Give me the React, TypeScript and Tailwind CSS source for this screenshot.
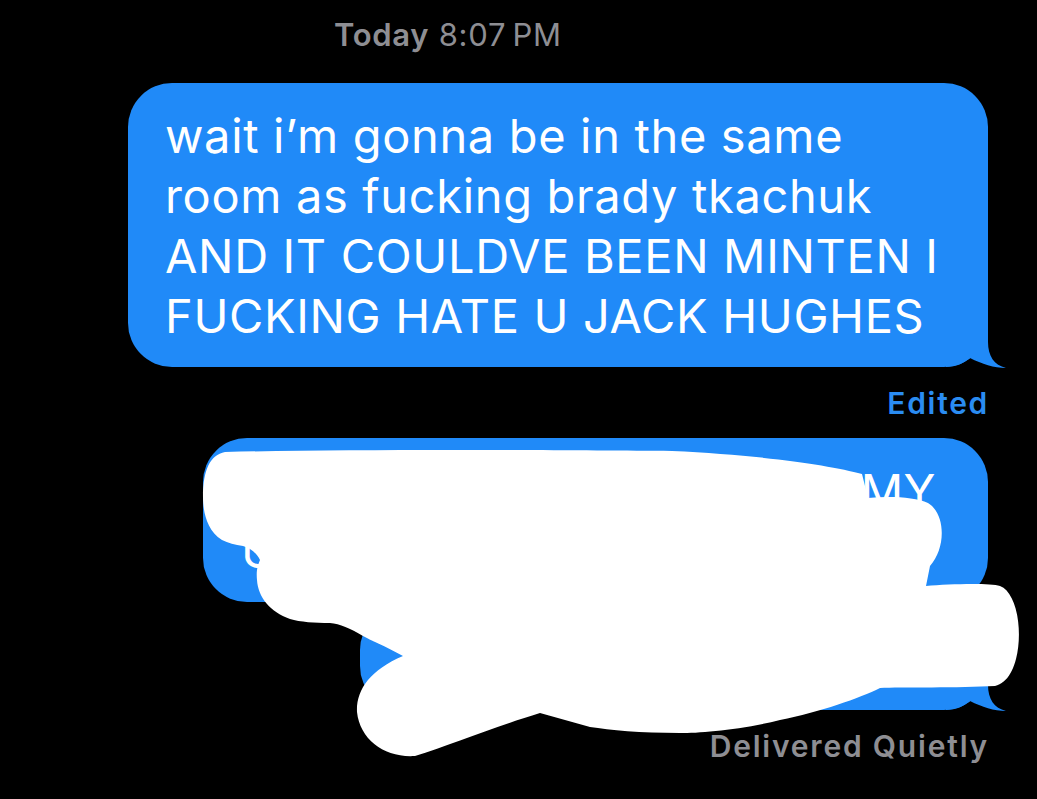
import React from "react";

function Tail() {
  return (
    <svg
      className="absolute right-[-18px] bottom-[-1px]"
      width="60"
      height="50"
      viewBox="0 0 60 50"
    >
      <path
        d="M 0 0 L 42 0 L 42 24 C 42 38 48 47 60 50 C 48 50 36 46 24 40 C 18 45 10 49 0 49 Z"
        fill="#208af8"
      />
    </svg>
  );
}

export default function App() {
  return (
    <div className="relative w-[1037px] h-[799px] bg-black overflow-hidden font-['Inter',sans-serif]">
      <div className="flex flex-col items-end pr-[49px]">
        <div className="self-start pl-[334px] pt-[17px] text-[31px] leading-[36px] tracking-[0.7px] text-[#8e8e93]">
          <span className="font-semibold">Today</span>{" "}
          <span>8:07&#8201;PM</span>
        </div>

        <div className="relative mt-[30px] w-[860px] rounded-[44px] bg-[#208af8] pl-[37px] pr-[10px] pt-[23px] pb-[21px] text-[47px] leading-[60px] tracking-[0.65px] text-white">
          wait i’m gonna be in the same
          <br />
          room as fucking brady tkachuk
          <br />
          AND IT COULDVE BEEN MINTEN I
          <br />
          FUCKING HATE U JACK HUGHES
          <Tail />
        </div>

        <div className="mt-[18px] mr-[-1px] text-[30px] leading-[36px] tracking-[1.7px] font-semibold text-[#2a8cf2]">
          Edited
        </div>

        <div className="mt-[17px] w-[785px] rounded-[44px] bg-[#208af8] pl-[38px] pr-[52px] pt-[23px] pb-[21px] text-[47px] leading-[60px] tracking-[0.5px] text-white">
          <div className="flex justify-end">MY</div>
          <div>U</div>
        </div>

        <div className="relative mt-[4px] w-[628px] rounded-[44px] bg-[#208af8] pl-[38px] pr-[30px] pt-[23px] pb-[21px] text-[47px] leading-[60px] text-white">
          <div>&nbsp;</div>
          <Tail />
        </div>

        <div className="mt-[18px] mr-[-1px] text-[30px] leading-[36px] tracking-[1.8px] font-semibold text-[#8e8e93]">
          Delivered Quietly
        </div>
      </div>

      <svg
        className="absolute left-0 top-0 pointer-events-none"
        width="1037"
        height="799"
        viewBox="0 0 1037 799"
      >
        <path
          fill="#ffffff"
          d="M 225 452
             C 350 449 560 450 672 451
             C 760 455 830 465 862 474
             L 868 498
             C 890 496 915 497 928 503
             C 946 514 946 548 930 566
             L 926 586
             C 950 584 990 583 1000 586
             C 1026 596 1026 680 995 686
             C 960 688 900 687 880 688
             C 860 698 820 712 780 720
             C 740 730 700 733 680 733
             C 640 733 610 730 590 727
             L 540 713
             C 500 725 450 745 415 756
             C 385 758 360 740 357 712
             C 356 690 370 670 403 656
             C 385 646 370 640 363 636
             C 350 628 340 624 330 623
             C 315 623 300 622 290 619
             C 270 612 258 597 257 580
             C 256 570 258 565 260 560
             C 257 553 250 548 243 546
             C 235 545 228 543 222 540
             C 206 530 203 510 203 497
             C 203 470 210 455 225 452 Z"
        />
      </svg>
    </div>
  );
}
